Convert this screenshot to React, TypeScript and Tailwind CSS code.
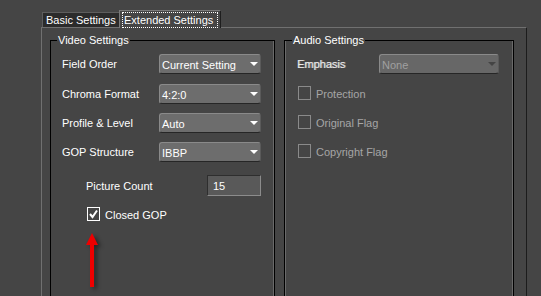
import React from "react";

function Arrow({ color }: { color: string }) {
  return (
    <svg width="8" height="4" viewBox="0 0 8 4" className="shrink-0">
      <polygon points="0,0 8,0 4,4" fill={color} />
    </svg>
  );
}

function Dropdown({ value, width, disabled }: { value: string; width: string; disabled?: boolean }) {
  return (
    <div
      className={
        "h-[20px] flex items-center justify-between pl-[2px] pr-[2px] rounded-[3px] border border-[#8a8a8a] border-b-[#262626] border-r-[#5a5a5a] " +
        width +
        (disabled ? " bg-[#676767] text-[#a0a0a0]" : " bg-[#6d6d6d] text-white")
      }
    >
      <span className="leading-[14px] pt-[1px]">{value}</span>
      <Arrow color={disabled ? "#444444" : "#ffffff"} />
    </div>
  );
}

function Check({ checked, disabled, label }: { checked?: boolean; disabled?: boolean; label: string }) {
  return (
    <div className="flex items-center h-[14px]">
      <div
        className={
          "w-[13px] h-[14px] border flex items-center justify-center shrink-0 " +
          (disabled ? "border-[#8a8a8a]" : "border-white")
        }
      >
        {checked && (
          <svg width="11" height="11" viewBox="0 0 11 11">
            <polyline points="2,5 4.5,8 9,1.5" fill="none" stroke="#ffffff" strokeWidth="2" />
          </svg>
        )}
      </div>
      <span className={"ml-[5px] leading-[14px] pt-[1px] " + (disabled ? "text-[#a6a6a6]" : "text-white")}>{label}</span>
    </div>
  );
}

export default function App() {
  return (
    <div className="relative w-[541px] h-[296px] overflow-hidden bg-[#454545] text-[11px] text-white font-['Liberation_Sans',_'Arial',_sans-serif]">
      <div className="pl-[41px] pt-[9px] w-[527px]">
        {/* tabs */}
        <div className="flex items-end h-[18px]">
          <div className="ml-[1px] w-[77px] h-[15px] bg-[#2b2b2b] border-t border-l border-[#5e5e5e] pl-[3px] pt-[1px] leading-[13px] text-white">
            Basic Settings
          </div>
          <div className="relative z-10 -mb-px w-[102px] h-[18px] bg-[#454545] border-t border-l border-[#7a7a7a] border-r border-r-[#1e1e1e] flex px-[2px] pt-[1px]">
            <div className="flex-1 border border-dotted border-white pl-[1px] pt-[1px] leading-[13px]">Extended Settings</div>
          </div>
        </div>
        {/* panel */}
        <div className="h-[280px] border-t border-l border-[#707070] border-r border-r-[#1c1c1c] flex gap-[9px] pl-[8px] pt-[12px]">
          {/* Video group */}
          <div className="relative w-[225px] h-[300px] border border-black shadow-[inset_-1px_0_0_#6a6a6a]">
            <span className="absolute -top-[8px] left-[6px] px-[1px] bg-[#454545] leading-[14px] text-white">Video Settings</span>
            <div className="pt-[13px] pl-[11px] flex flex-col">
              <div className="flex items-center h-[20px]">
                <span className="w-[97px] leading-[14px]">Field Order</span>
                <Dropdown value="Current Setting" width="w-[102px]" />
              </div>
              <div className="flex items-center h-[20px] mt-[10px]">
                <span className="w-[97px] leading-[14px]">Chroma Format</span>
                <Dropdown value="4:2:0" width="w-[102px]" />
              </div>
              <div className="flex items-center h-[20px] mt-[9px]">
                <span className="w-[97px] leading-[14px]">Profile &amp; Level</span>
                <Dropdown value="Auto" width="w-[102px]" />
              </div>
              <div className="flex items-center h-[20px] mt-[9px]">
                <span className="w-[97px] leading-[14px]">GOP Structure</span>
                <Dropdown value="IBBP" width="w-[102px]" />
              </div>
              <div className="flex items-center h-[21px] mt-[13px] pl-[24px]">
                <span className="w-[121px] leading-[14px]">Picture Count</span>
                <div className="w-[54px] h-[21px] bg-[#595959] border border-[#2e2e2e] border-b-[#8c8c8c] border-r-[#8c8c8c] pl-[5px] flex items-center leading-[14px]">
                  15
                </div>
              </div>
              <div className="mt-[11px] pl-[25px]">
                <Check checked label="Closed GOP" />
              </div>
            </div>
          </div>
          {/* Audio group */}
          <div className="relative w-[230px] h-[300px] border border-black shadow-[inset_1px_0_0_#6a6a6a,inset_-1px_0_0_#6a6a6a]">
            <span className="absolute -top-[8px] left-[7px] px-[1px] bg-[#454545] leading-[14px] text-white">Audio Settings</span>
            <div className="pt-[13px] pl-[12px] flex flex-col">
              <div className="flex items-center h-[20px]">
                <span className="w-[82px] leading-[14px] text-[#ececec] [text-shadow:1px_0_0_#9a9a9a]">Emphasis</span>
                <Dropdown value="None" width="w-[120px]" disabled />
              </div>
              <div className="flex flex-col gap-[15px] mt-[12px] pl-[1px]">
                <Check disabled label="Protection" />
                <Check disabled label="Original Flag" />
                <Check disabled label="Copyright Flag" />
              </div>
            </div>
          </div>
        </div>
      </div>
      {/* red annotation arrow */}
      <svg
        className="absolute left-[84px] top-[231px] [filter:drop-shadow(3px_2px_2px_rgba(0,0,0,0.45))]"
        width="18"
        height="60"
        viewBox="0 0 18 60"
      >
        <polygon points="8,2 2,14 14,14" fill="#ee0000" />
        <rect x="6" y="13" width="4" height="43" fill="#ee0000" />
      </svg>
    </div>
  );
}
